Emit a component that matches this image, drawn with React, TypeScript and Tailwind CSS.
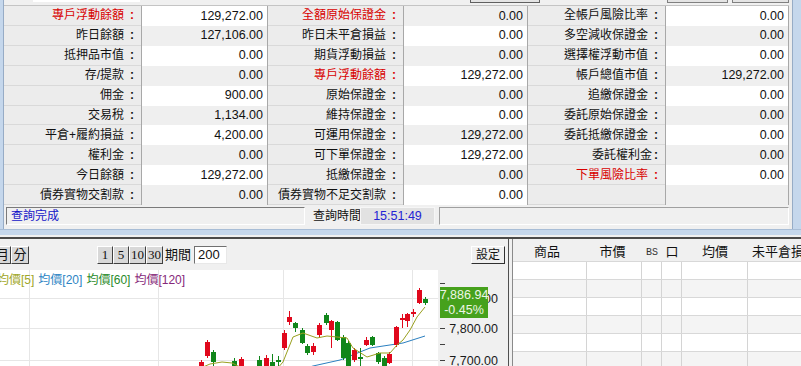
import React from 'react';

type Item = { label: string; value: string; red?: boolean; tight?: boolean };

const col1: Item[] = [
  { label: '專戶浮動餘額', value: '129,272.00', red: true },
  { label: '昨日餘額', value: '127,106.00' },
  { label: '抵押品市值', value: '0.00' },
  { label: '存/提款', value: '0.00' },
  { label: '佣金', value: '900.00' },
  { label: '交易稅', value: '1,134.00' },
  { label: '平倉+履約損益', value: '4,200.00' },
  { label: '權利金', value: '0.00' },
  { label: '今日餘額', value: '129,272.00' },
  { label: '債券實物交割款', value: '0.00' },
];

const col2: Item[] = [
  { label: '全額原始保證金', value: '0.00', red: true },
  { label: '昨日未平倉損益', value: '0.00' },
  { label: '期貨浮動損益', value: '0.00' },
  { label: '專戶浮動餘額', value: '129,272.00', red: true },
  { label: '原始保證金', value: '0.00' },
  { label: '維持保證金', value: '0.00' },
  { label: '可運用保證金', value: '129,272.00' },
  { label: '可下單保證金', value: '129,272.00' },
  { label: '抵繳保證金', value: '0.00' },
  { label: '債券實物不足交割款', value: '0.00' },
];

const col3: Item[] = [
  { label: '全帳戶風險比率', value: '0.00' },
  { label: '多空減收保證金', value: '0.00' },
  { label: '選擇權浮動市值', value: '0.00' },
  { label: '帳戶總值市值', value: '129,272.00' },
  { label: '追繳保證金', value: '0.00' },
  { label: '委託原始保證金', value: '0.00' },
  { label: '委託抵繳保證金', value: '0.00' },
  { label: '委託權利金', value: '0.00', tight: true },
  { label: '下單風險比率', value: '0.00', red: true },
  { label: '', value: '' },
];

// [x, bodyTop, bodyBottom, wickTop, wickBottom, up]
const candles: [number, number, number, number, number, boolean][] = [
  [201, 362, 368, 360, 368, true],
  [207, 342, 356, 340, 358, true],
  [213, 352, 362, 350, 366, false],
  [234, 361, 368, 358, 368, false],
  [241, 359, 368, 357, 368, true],
  [259, 360, 368, 356, 368, false],
  [266, 358, 368, 355, 368, true],
  [272, 362, 368, 354, 368, false],
  [278, 360, 362, 356, 368, false],
  [284, 333, 348, 330, 350, true],
  [289, 317, 322, 311, 325, true],
  [295, 323, 328, 322, 332, false],
  [302, 330, 343, 328, 344, false],
  [307, 346, 353, 344, 355, false],
  [313, 346, 352, 343, 355, true],
  [319, 325, 335, 323, 337, true],
  [326, 315, 323, 313, 325, false],
  [331, 321, 330, 320, 348, true],
  [337, 322, 340, 321, 341, false],
  [343, 337, 358, 335, 360, false],
  [348, 343, 368, 340, 368, false],
  [354, 350, 360, 348, 362, true],
  [360, 357, 359, 348, 368, false],
  [366, 340, 345, 337, 346, true],
  [372, 337, 345, 336, 346, false],
  [378, 353, 362, 352, 364, false],
  [384, 358, 368, 356, 368, false],
  [389, 354, 363, 352, 364, true],
  [396, 327, 345, 326, 347, true],
  [402, 318, 320, 314, 328, true],
  [407, 314, 321, 313, 327, true],
  [413, 312, 314, 309, 317, true],
  [419, 290, 303, 288, 304, true],
  [425, 299, 303, 297, 305, false],
];

const ma5 = [
  [196, 370], [210, 364], [222, 362], [232, 363], [246, 370], [262, 372], [276, 370], [283, 362],
  [293, 337], [303, 333], [317, 338], [327, 336], [337, 337], [347, 338], [353, 348], [367, 357],
  [380, 353], [390, 353], [397, 345], [403, 340], [410, 330], [417, 317], [425, 307],
];
const ma20 = [[300, 370], [313, 366], [340, 360], [370, 348], [403, 343], [425, 336]];

const pts = (a: number[][]) => a.map(([x, y]) => `${x},${y - 270}`).join(' ');

function Column({ items, labelW, valueW, whiteFirst }: { items: Item[]; labelW: string; valueW: string; whiteFirst: boolean }) {
  return (
    <div className="flex flex-col">
      {items.map((it, i) => {
        const white = (i % 2 === 0) === whiteFirst;
        return (
          <div key={i} className="flex h-[20px]">
            <div
              className={`${labelW} flex items-center justify-end pr-[5px] bg-[#ececec] border-b border-[#d9d9d9] text-[12px] ${
                it.red ? 'text-[#d80000]' : 'text-[#111111]'
              }`}
            >
              {it.label && (
                <>
                  <span>{it.label}</span>
                  <span className={`${it.tight ? 'ml-0' : 'ml-[4px]'} w-[8px] text-center font-bold`}>:</span>
                </>
              )}
            </div>
            <div
              className={`${valueW} flex items-center justify-end pr-[4px] border-x border-[#a8a8a8] text-[12.5px] text-[#111111] ${
                white ? 'bg-white' : 'bg-[#efefef]'
              }`}
            >
              {it.value}
            </div>
          </div>
        );
      })}
    </div>
  );
}

function Btn({ children, w }: { children: React.ReactNode; w: string }) {
  return (
    <div
      className={`${w} h-[18px] flex items-center justify-center bg-[#d8d8d8] border border-t-white border-l-white border-r-[#404040] border-b-[#404040] font-['Liberation_Serif','Noto_Sans_CJK_TC',serif] text-[13px] leading-none`}
    >
      {children}
    </div>
  );
}

export default function App() {
  return (
    <div className="w-[801px] h-[366px] overflow-hidden bg-[#f0f0f0] text-[#111111] font-['Liberation_Sans','Noto_Sans_CJK_TC',sans-serif]">
      {/* Account window */}
      <div className="h-[237px] flex flex-col">
        <div className="flex h-[229px]">
          <div className="w-[4px] bg-[#c5d7ec] border-r border-[#97acc6]" />
          <div className="w-[785px] flex flex-col">
            <div className="h-[5px] flex items-start">
              <div className="ml-[29px] w-[107px] h-[2px] bg-white" />
              <div className="ml-[330px] w-[70px] h-[3px] bg-[#e4e4e4] border-x border-b border-[#606060]" />
              <div className="ml-[127px] w-[61px] h-[3px] bg-[#e4e4e4] border-x border-b border-[#808080]" />
              <div className="ml-[4px] w-[57px] h-[3px] bg-[#e4e4e4] border-x border-b border-[#808080]" />
            </div>
            <div className="flex h-[200px] border-t border-[#c4c4c4]">
              <Column items={col1} labelW="w-[137px]" valueW="w-[127px]" whiteFirst />
              <Column items={col2} labelW="w-[135px]" valueW="w-[125px]" whiteFirst={false} />
              <Column items={col3} labelW="w-[137px]" valueW="w-[124px]" whiteFirst />
            </div>
            {/* Status bar */}
            <div className="flex items-center h-[18px] mt-[2px] text-[12px]">
              <div className="ml-[2px] w-[299px] h-full flex items-center pl-[4px] border border-t-[#7a7a7a] border-l-[#7a7a7a] border-b-white border-r-white text-[#1414c8]">
                查詢完成
              </div>
              <div className="w-[55px] pl-[8px] whitespace-nowrap">查詢時間</div>
              <div className="w-[75px] h-full flex items-center justify-center bg-[#e2e2e2] border border-[#f6f6f6] text-[12.5px] text-[#2424d4]">
                15:51:49
              </div>
              <div className="ml-[4px] flex-1 h-full border border-t-[#a0a0a0] border-l-[#a0a0a0] border-b-white border-r-white" />
            </div>
          </div>
          <div className="w-[3px] bg-[#ececec]" />
          <div className="w-[9px] bg-[#c5d7ec] border-l border-[#97acc6]" />
        </div>
        <div className="h-[6px] bg-[#c5d7ec] border-t border-[#a8bdd6]" />
        <div className="h-[2px] bg-[#f0f0f0]" />
      </div>

      {/* Lower area */}
      <div className="flex h-[129px] border-t-2 border-[#4a4a4a]">
        {/* Chart panel */}
        <div className="w-[508px] flex flex-col">
          <div className="h-[31px] flex items-center">
            <div className="-ml-[6px]">
              <Btn w="w-[17px]">月</Btn>
            </div>
            <Btn w="w-[18px]">分</Btn>
            <div className="ml-[68px] flex">
              <Btn w="w-[16px]">1</Btn>
              <Btn w="w-[16px]">5</Btn>
              <Btn w="w-[17px]">10</Btn>
              <Btn w="w-[17px]">30</Btn>
            </div>
            <span className="ml-[2px] text-[13px]">期間</span>
            <div className="ml-[3px] w-[33px] h-[18px] flex items-center pl-[3px] bg-white border border-t-[#707070] border-l-[#707070] border-b-[#e8e8e8] border-r-[#e8e8e8] text-[13px]">
              200
            </div>
            <div className="ml-auto mr-[3px] w-[34px] h-[18px] flex items-center justify-center bg-[#f0f0f0] border border-t-white border-l-white border-r-[#303030] border-b-[#303030] text-[12px]">
              設定
            </div>
          </div>
          <div className="flex-1 flex relative">
            <div className="w-[438px] h-full bg-white relative">
              <svg width="438" height="98" className="absolute left-0 top-0">
                {[29, 158, 283, 412].map((x) => (
                  <line key={x} x1={x + 0.5} y1={0} x2={x + 0.5} y2={98} stroke="#e6e6e6" />
                ))}
                {[28, 58, 90].map((y) => (
                  <line key={y} x1={0} y1={y + 0.5} x2={438} y2={y + 0.5} stroke="#e6e6e6" />
                ))}
                <polyline points={pts(ma20)} fill="none" stroke="#2b7fc0" strokeWidth={1} />
                {candles.map(([x, bt, bb, wt, wb, up], i) => (
                  <g key={i} fill={up ? '#e0081c' : '#10861a'} stroke="none">
                    <rect x={x} y={wt - 270} width={1} height={wb - wt} />
                    <rect x={x - 2} y={bt - 270} width={5} height={Math.max(bb - bt, 1)} />
                  </g>
                ))}
                <polyline points={pts(ma5)} fill="none" stroke="#9aa020" strokeWidth={1} />
              </svg>
              <div className="absolute top-[3px] -left-[3px] flex gap-[4px] text-[12px] leading-[15px] whitespace-nowrap">
                <span className="text-[#a0a628]">均價[5]</span>
                <span className="text-[#2b84c4]">均價[20]</span>
                <span className="text-[#2a8a2a]">均價[60]</span>
                <span className="text-[#86287a]">均價[120]</span>
              </div>
            </div>
            <div className="w-[70px] h-full relative">
              <svg width="70" height="98" className="absolute left-0 top-0">
                {[13, 28, 43, 58, 74, 90].map((y) => (
                  <line key={y} x1={2} y1={y + 0.5} x2={7} y2={y + 0.5} stroke="#404040" />
                ))}
                {[
                  ['7,900.00', 28],
                  ['7,800.00', 58],
                  ['7,700.00', 90],
                ].map(([t, y]) => (
                  <text
                    key={t as string}
                    x={60}
                    y={(y as number) + 4.5}
                    textAnchor="end"
                    fontSize="12.5"
                    fill="#1a1a1a"
                    fontFamily="Liberation Sans, sans-serif"
                  >
                    {t}
                  </text>
                ))}
              </svg>
              <div className="absolute left-[2px] top-[17px] w-[48px] h-[31px] bg-[#46a11c] flex flex-col items-center justify-center text-[12.5px] leading-[15px] text-[#eef6e6]">
                <span>7,886.94</span>
                <span>-0.45%</span>
              </div>
            </div>
          </div>
        </div>

        {/* Divider */}
        <div className="w-[5px] bg-[#f0f0f0] border-l border-[#505050] border-r border-r-[#8a8a8a]" />

        {/* Position table */}
        <div className="flex-1 flex flex-col pt-[4px] overflow-hidden">
          <div className="flex h-[19px] items-center bg-[#f0f0f0] border-b border-[#d8d8d8] text-[13px] whitespace-nowrap">
            <div className="w-[74px] shrink-0 text-center pr-[6px]">商品</div>
            <div className="w-[55px] shrink-0 text-center pr-[4px]">市價</div>
            <div className="w-[20px] shrink-0 text-center font-['Liberation_Mono',monospace] text-[10px] text-[#333333]">BS</div>
            <div className="w-[20px] shrink-0 text-center">口</div>
            <div className="w-[66px] shrink-0 text-center">均價</div>
            <div className="w-[80px] shrink-0 pl-[4px]">未平倉損益</div>
          </div>
          {[0, 1, 2, 3, 4, 5].map((r) => (
            <div key={r} className={`flex h-[18px] shrink-0 border-b border-[#d8d8d8] ${r % 2 === 0 ? 'bg-white' : 'bg-[#f4f4f4]'}`}>
              <div className="w-[74px] shrink-0 border-r border-[#d4d4d4]" />
              <div className="w-[55px] shrink-0 border-r border-[#d4d4d4]" />
              <div className="w-[20px] shrink-0 border-r border-[#d4d4d4]" />
              <div className="w-[20px] shrink-0 border-r border-[#d4d4d4]" />
              <div className="w-[66px] shrink-0 border-r border-[#d4d4d4]" />
              <div className="w-[80px] shrink-0" />
            </div>
          ))}
        </div>
      </div>
    </div>
  );
}
